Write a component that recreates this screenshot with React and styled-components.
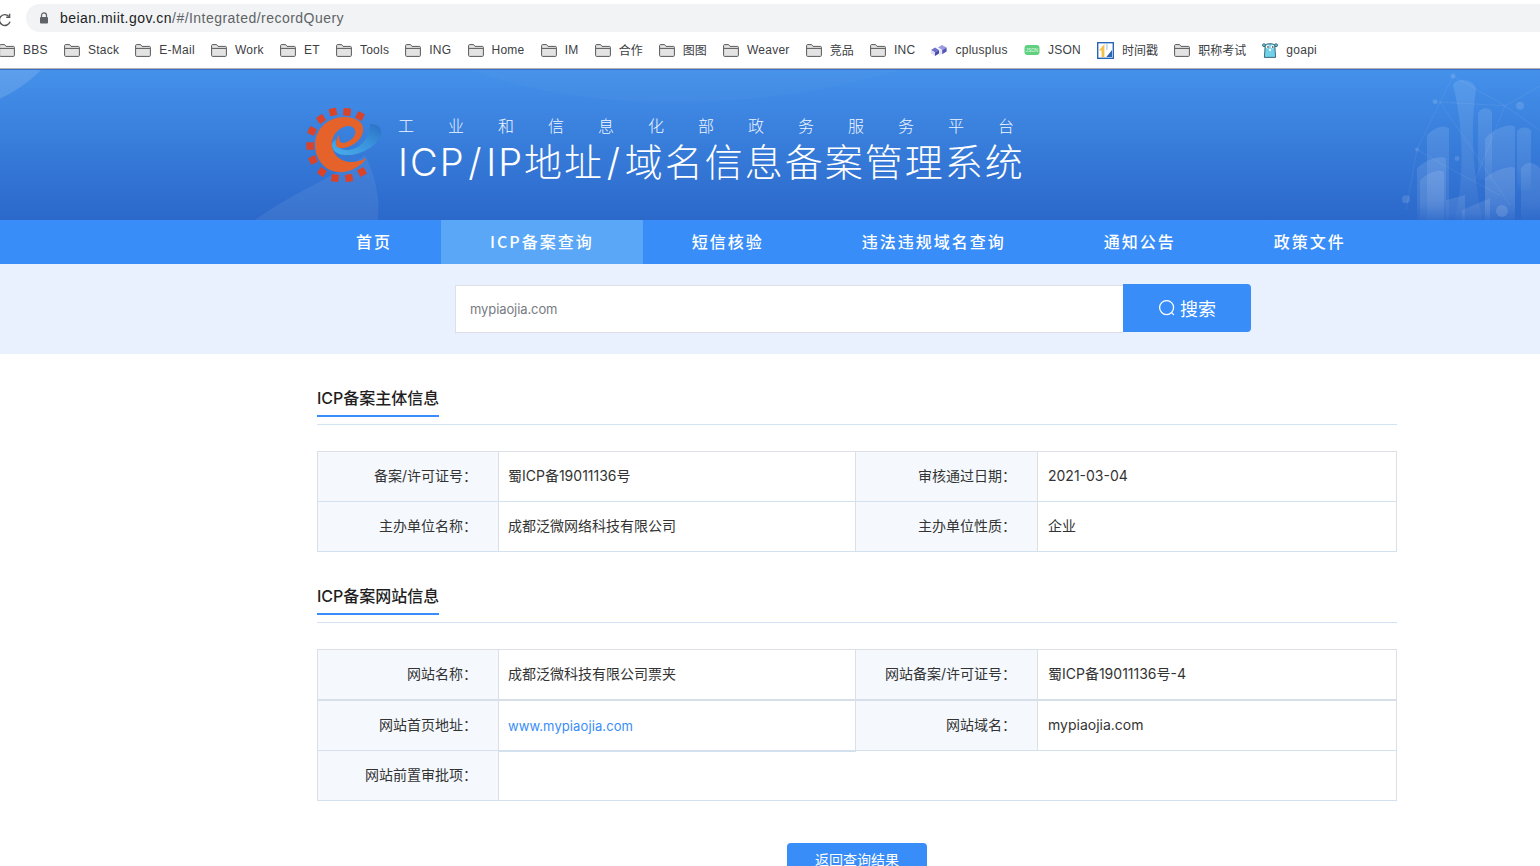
import styled, { createGlobalStyle } from "styled-components";

const GlobalStyle = createGlobalStyle`
  html, body {
    margin: 0;
    height: 866px;
    overflow: hidden;
    background: #fff;
  }
  * { box-sizing: border-box; }
  body {
    font-family: Inter, "Noto Sans CJK SC", sans-serif;
    color: #333;
  }
`;

const bookmarks = [
  { name: "BBS", icon: "folder" },
  { name: "Stack", icon: "folder" },
  { name: "E-Mail", icon: "folder" },
  { name: "Work", icon: "folder" },
  { name: "ET", icon: "folder" },
  { name: "Tools", icon: "folder" },
  { name: "ING", icon: "folder" },
  { name: "Home", icon: "folder" },
  { name: "IM", icon: "folder" },
  { name: "合作", icon: "folder", cjk: true },
  { name: "图图", icon: "folder", cjk: true },
  { name: "Weaver", icon: "folder" },
  { name: "竞品", icon: "folder", cjk: true },
  { name: "INC", icon: "folder" },
  { name: "cplusplus", icon: "cpp" },
  { name: "JSON", icon: "json" },
  { name: "时间戳", icon: "time", cjk: true },
  { name: "职称考试", icon: "folder", cjk: true },
  { name: "goapi", icon: "go" },
];

const navItems = ["首页", "ICP备案查询", "短信核验", "违法违规域名查询", "通知公告", "政策文件"];

const gearTeeth = [
  [347, 112, 5], [333, 112, -12], [360, 116, 25], [321, 119, -35], [312, 131, -65], [310, 146, 90],
  [313, 160, 65], [322, 172, 35], [335, 178, 8], [349, 178, -8], [362, 172, -28],
];

const FolderIcon = () => (
  <svg width="16" height="13" viewBox="0 0 16 13">
    <path d="M.6 11.4V1.6c0-.6.4-1 1-1h4l1.4 1.8h7.4c.6 0 1 .4 1 1v8c0 .6-.4 1-1 1H1.6c-.6 0-1-.4-1-1z" fill="#e3e3e3" stroke="#5a5a5a" strokeWidth="1" />
    <path d="M1 4.4h14" stroke="#5a5a5a" strokeWidth="1" />
  </svg>
);

const CppIcon = () => (
  <svg width="16" height="13" viewBox="0 0 16 13">
    <path d="M0 6l4-2.4 4 2.4-4 2.4z" fill="#6f70c9" />
    <path d="M0 6v3.4l4 2.6V8.4z" fill="#dcdcf5" />
    <path d="M4 8.4V12l4-2.6V6z" fill="#4a4ba6" />
    <path d="M7 3.4L11 1l4.6 2.4-4.4 2.6z" fill="#9a9be0" />
    <path d="M8 6l3.2 0v3.4L8 11.4z" fill="#e7e7fa" />
    <path d="M11.2 6l4.4-2.6v4l-4.4 2.8z" fill="#5657b4" />
  </svg>
);

const JsonIcon = () => (
  <svg width="16" height="12" viewBox="0 0 16 12">
    <rect x="0.5" y="1" width="15" height="10" rx="3" fill="#5fd07d" />
    <text x="8" y="7.6" textAnchor="middle" fontSize="4.6" fill="#eafff0" fontFamily="Liberation Sans, sans-serif">JSON</text>
  </svg>
);

const TimeIcon = () => (
  <svg width="17" height="17" viewBox="0 0 17 17">
    <rect x="0.7" y="0.7" width="15.6" height="15.6" fill="#fff" stroke="#2a66b8" strokeWidth="1.4" />
    <path d="M2 8.4L7.4 2v13H4.6V8.4z" fill="#f4c04a" />
    <path d="M9.4 15L15 8v7z" fill="#2a66b8" />
    <path d="M9.4 2h1v6h-1z" fill="#9dbce3" />
  </svg>
);

const GoIcon = () => (
  <svg width="16" height="16" viewBox="0 0 16 16">
    <circle cx="2" cy="3.2" r="1.5" fill="#5fc6e0" stroke="#234a58" strokeWidth=".7" />
    <circle cx="14" cy="3.2" r="1.5" fill="#5fc6e0" stroke="#234a58" strokeWidth=".7" />
    <path d="M3.2 3.2C4.6 1.2 11.4 1.2 12.8 3.2l.8 12.2H2.4z" fill="#6fd2ea" stroke="#234a58" strokeWidth=".8" />
    <circle cx="5.6" cy="4.8" r="1.8" fill="#fff" />
    <circle cx="10.4" cy="4.8" r="1.8" fill="#fff" />
    <circle cx="6" cy="5" r=".8" fill="#111" />
    <circle cx="10.8" cy="5" r=".8" fill="#111" />
    <rect x="7" y="6.8" width="2" height="2.2" fill="#fff" />
  </svg>
);

const bookmarkIcons = { folder: FolderIcon, cpp: CppIcon, json: JsonIcon, time: TimeIcon, go: GoIcon };

// the round company mark: red gear teeth, orange e, blue swoosh
const Logo = () => (
  <svg width="76" height="76" viewBox="306 107 76 76">
    <defs>
      <linearGradient id="swoosh" x1="0" y1="1" x2="1" y2="0">
        <stop offset="0" stopColor="#4aaeea" />
        <stop offset="0.55" stopColor="#3a93dc" />
        <stop offset="1" stopColor="#2a6fc6" />
      </linearGradient>
    </defs>
    {gearTeeth.map(([x, y, r]) => (
      <rect key={`${x}-${y}`} x={x - 3.7} y={y - 3.7} width="7.4" height="7.4" rx="0.6" fill="#d9432a" transform={`rotate(${r} ${x} ${y})`} />
    ))}
    <path d="M370 124C378 124 382 128 381 134C379 144 362 156 346 155C337 155 331 150 332 144C333 141 335 140 336 139C334 146 340 150 347 150C358 150 370 140 370 124Z" fill="url(#swoosh)" />
    <path d="M367 158C358 169 347 173 338 172C324 171 315 158 315 145C315 129 328 117 344 117C356 117 364 122 363 131C362 141 350 148 342 148C338 148 336 147 336 144C336 141 337 137 339 135C339 140 340 143 343 143C350 142 357 136 355 130C353 125 346 125 340 129C334 133 331 140 332 147C334 157 343 162 351 162C357 162 363 160 367 158Z" fill="#e5622a" />
  </svg>
);

// background drawing of the banner: pale curves and the wireframe skyline
const BannerArt = () => (
  <BannerSvg viewBox="0 69 1540 151" preserveAspectRatio="none">
    <defs>
      <linearGradient id="tower" x1="0" y1="0" x2="0" y2="1">
        <stop offset="0" stopColor="#fff" stopOpacity="0.11" />
        <stop offset="0.7" stopColor="#fff" stopOpacity="0.08" />
        <stop offset="1" stopColor="#fff" stopOpacity="0.02" />
      </linearGradient>
    </defs>
    <path d="M0 69H41C28 82 14 91 0 98Z" fill="#fff" fillOpacity="0.13" />
    <path d="M255 220C290 194 335 176 365 155C376 176 380 200 378 220Z" fill="#fff" fillOpacity="0.07" />
    <path d="M470 69C600 115 760 110 900 69Z" fill="#fff" fillOpacity="0.025" />
    <g stroke="#fff" strokeOpacity="0.07" strokeWidth="1" fill="none">
      <path d="M1417 149L1453 75L1505 105L1540 85M1417 149L1406 210M1417 149L1453 170L1500 195M1435 101L1505 105L1540 130M1440 101L1510 205M1505 105L1475 180" />
    </g>
    <g fill="#fff" fillOpacity="0.13">
      <circle cx="1453" cy="75" r="2.5" />
      <circle cx="1435" cy="101" r="2.5" />
      <circle cx="1417" cy="149" r="2" />
      <circle cx="1520" cy="105" r="4" />
      <circle cx="1406" cy="199" r="4" />
      <circle cx="1502" cy="211" r="6" />
      <circle cx="1457" cy="158" r="2.5" />
    </g>
    <g fill="url(#tower)">
      <path d="M1453 84C1456 76 1474 78 1476 88C1472 120 1470 150 1482 220H1455C1466 170 1462 120 1453 84Z" />
      <path d="M1478 112C1482 106 1490 106 1492 112V180H1478Z" />
      <path d="M1427 135C1434 126 1444 124 1449 128V220H1427Z" />
      <path d="M1417 168C1424 160 1440 154 1446 158V220H1417Z" />
      <path d="M1420 180C1428 172 1440 168 1444 172V220H1420Z" />
      <path d="M1485 138C1494 128 1508 122 1515 126V220H1485Z" />
      <path d="M1485 178C1494 170 1512 164 1515 168V220H1485Z" />
      <path d="M1517 130C1522 126 1528 126 1531 130V190H1517Z" />
      <path d="M1521 168C1526 160 1535 162 1540 168V220H1521Z" />
      <path d="M1446 200L1465 195V220H1446Z" />
      <path d="M1462 210L1490 198V220H1462Z" />
    </g>
  </BannerSvg>
);

const SearchGlyph = () => (
  <svg width="18" height="18" viewBox="0 0 18 18" fill="none" stroke="#fff" strokeWidth="1.3">
    <circle cx="8.6" cy="8.6" r="7" />
    <path d="M13.6 13.6L15.6 15.6" strokeLinecap="round" />
  </svg>
);

const LockGlyph = () => (
  <svg width="10" height="12" viewBox="0 0 10 12">
    <path d="M2.5 5V3.4a2.5 2.5 0 0 1 5 0V5" fill="none" stroke="#5f6368" strokeWidth="1.2" />
    <rect x="1" y="5" width="8" height="6.4" rx="1" fill="#5f6368" />
  </svg>
);

const ReloadGlyph = () => (
  <svg width="14" height="14" viewBox="0 0 14 14" fill="none" stroke="#555" strokeWidth="1.4">
    <path d="M10.8 3.4A5.4 5.4 0 1 0 12 8.6" />
    <path d="M11.6 0.8V4.2H8.2" />
  </svg>
);

function Section({ title, children }) {
  return (
    <SectionWrap>
      <SectionHead>
        <SectionTitle>{title}</SectionTitle>
      </SectionHead>
      {children}
    </SectionWrap>
  );
}

export default function App() {
  return (
    <Page>
      <GlobalStyle />
      <BrowserBar>
        <ReloadSlot><ReloadGlyph /></ReloadSlot>
        <AddressPill>
          <LockGlyph />
          <UrlText>
            beian.miit.gov.cn<UrlPath>/#/Integrated/recordQuery</UrlPath>
          </UrlText>
        </AddressPill>
      </BrowserBar>
      <BookmarkBar>
        {bookmarks.map((b) => {
          const Icon = bookmarkIcons[b.icon];
          return (
            <Bookmark key={b.name}>
              <Icon />
              <BookmarkName $cjk={b.cjk}>{b.name}</BookmarkName>
            </Bookmark>
          );
        })}
      </BookmarkBar>

      <Banner>
        <BannerArt />
        <LogoSlot><Logo /></LogoSlot>
        <BrandText>
          <Ministry>工业和信息化部政务服务平台</Ministry>
          <SystemName>ICP<Slash>/</Slash>IP地址<Slash>/</Slash>域名信息备案管理系统</SystemName>
        </BrandText>
      </Banner>

      <NavBar>
        {navItems.map((item) => (
          <NavItem key={item} $active={item === "ICP备案查询"}>{item}</NavItem>
        ))}
      </NavBar>

      <SearchBand>
        <SearchInput defaultValue="mypiaojia.com" />
        <SearchButton>
          <SearchGlyph />
          搜索
        </SearchButton>
      </SearchBand>

      <Section title="ICP备案主体信息">
        <InfoGrid>
          <LabelCell>备案/许可证号：</LabelCell>
          <ValueCell>蜀ICP备19011136号</ValueCell>
          <LabelCell>审核通过日期：</LabelCell>
          <ValueCell>2021-03-04</ValueCell>
          <LabelCell>主办单位名称：</LabelCell>
          <ValueCell>成都泛微网络科技有限公司</ValueCell>
          <LabelCell>主办单位性质：</LabelCell>
          <ValueCell>企业</ValueCell>
        </InfoGrid>
      </Section>

      <Section title="ICP备案网站信息">
        <InfoGrid>
          <LabelCell $thick>网站名称：</LabelCell>
          <ValueCell $thick>成都泛微科技有限公司票夹</ValueCell>
          <LabelCell $thick>网站备案/许可证号：</LabelCell>
          <ValueCell $thick>蜀ICP备19011136号-4</ValueCell>
          <LabelCell>网站首页地址：</LabelCell>
          <ValueCell $raised><SiteLink>www.mypiaojia.com</SiteLink></ValueCell>
          <LabelCell>网站域名：</LabelCell>
          <ValueCell>mypiaojia.com</ValueCell>
          <LabelCell>网站前置审批项：</LabelCell>
          <ValueCell $span={3} />
        </InfoGrid>
      </Section>

      <BackRow>
        <BackButton>返回查询结果</BackButton>
      </BackRow>
    </Page>
  );
}

const Page = styled.div`
  width: 1540px;
  height: 866px;
  overflow: hidden;
`;

const BrowserBar = styled.div`
  display: flex;
  height: 36px;
  padding-top: 4px;
`;

const ReloadSlot = styled.div`
  width: 26px;
  margin-left: -2px;
  margin-right: 2px;
  padding-top: 7px;
`;

const AddressPill = styled.div`
  flex: 1;
  height: 28px;
  margin-right: -20px;
  padding-left: 13px;
  display: flex;
  align-items: center;
  gap: 11px;
  background: #f1f3f4;
  border-radius: 14px;
`;

const UrlText = styled.div`
  font: 14px "Liberation Sans", sans-serif;
  letter-spacing: 0.47px;
  color: #202124;
`;

const UrlPath = styled.span`
  color: #5f6368;
`;

const BookmarkBar = styled.div`
  display: flex;
  align-items: center;
  gap: 16.15px;
  height: 33px;
  margin-left: -1px;
  border-bottom: 1px solid #b4b4b4;
  padding-bottom: 4px;
  white-space: nowrap;
`;

const Bookmark = styled.div`
  display: flex;
  align-items: center;
  gap: 8px;
  font: 12px "Liberation Sans", "Noto Sans CJK SC", sans-serif;
  color: #3c4043;
`;

const BookmarkName = styled.span`
  padding-bottom: ${(p) => (p.$cjk ? "2px" : "0")};
  letter-spacing: ${(p) => (p.$cjk ? "0" : "0.25px")};
`;

const Banner = styled.header`
  position: relative;
  height: 151px;
  padding: 37px 0 0 306px;
  display: flex;
  align-items: flex-start;
  gap: 16px;
  overflow: hidden;
  background: linear-gradient(180deg, #4491ea 0%, #2b68ca 100%);
  border-top: 1px solid #3a6fc9;
`;

const BannerSvg = styled.svg`
  position: absolute;
  inset: 0;
  width: 100%;
  height: 100%;
`;

const LogoSlot = styled.div`
  position: relative;
  height: 76px;
`;

const BrandText = styled.div`
  position: relative;
  color: #fff;
  white-space: nowrap;
  padding-top: 8px;
`;

const Ministry = styled.div`
  font: 300 16px/20px "Noto Sans CJK SC", sans-serif;
  letter-spacing: 34px;
  color: #f0f6ff;
`;

const SystemName = styled.h1`
  margin: 3px 0 0;
  font: 300 38px/48px Inter, "Noto Sans CJK SC", sans-serif;
  letter-spacing: 2px;
`;

const Slash = styled.span`
  padding: 0 2.75px;
`;

const NavBar = styled.nav`
  display: flex;
  height: 44px;
  padding-left: 307px;
  background: #388df8;
`;

const NavItem = styled.a`
  padding: 0 49px 2px;
  font: 500 16px/42px "Noto Sans CJK SC", sans-serif;
  letter-spacing: 2px;
  color: #fff;
  background: ${(p) => (p.$active ? "#5aa7f8" : "transparent")};
`;

const SearchBand = styled.div`
  display: flex;
  align-items: flex-start;
  height: 90px;
  padding: 20px 0 0 455px;
  background: #e8f1fd;
`;

const SearchInput = styled.input`
  width: 668px;
  height: 48px;
  margin-top: 1px;
  padding: 0 14px;
  border: 1px solid #dcdfe6;
  border-right: 0;
  outline: none;
  background: #fff;
  font: 13px Inter, sans-serif;
  letter-spacing: -0.1px;
  color: #777b82;
`;

const SearchButton = styled.button`
  width: 128px;
  height: 48px;
  display: flex;
  align-items: center;
  justify-content: center;
  gap: 4px;
  border: 0;
  border-radius: 0 4px 4px 0;
  background: #388df8;
  color: #fff;
  font: 18px "Noto Sans CJK SC", sans-serif;
`;

const SectionWrap = styled.section`
  width: 1080px;
  margin-left: 317px;
  padding-top: 32px;
`;

const SectionHead = styled.div`
  height: 39px;
  border-bottom: 1px solid #d3e3f3;
  margin-bottom: 26px;
`;

const SectionTitle = styled.h2`
  display: inline-block;
  height: 31px;
  margin: 0;
  border-bottom: 2px solid #388df8;
  font: 500 16px/24px Inter, "Noto Sans CJK SC", sans-serif;
  color: #1f1f1f;
`;

const InfoGrid = styled.div`
  display: grid;
  grid-template-columns: 181px 357px 182px 1fr;
  border-top: 1px solid #dcdfe6;
  border-left: 1px solid #dcdfe6;
  font: 14px Inter, "Noto Sans CJK SC", sans-serif;
  color: #333;
`;

const Cell = styled.div`
  height: ${(p) => (p.$thick ? "51px" : "50px")};
  display: flex;
  align-items: center;
  padding-bottom: 3px;
  border-right: 1px solid #dcdfe6;
  border-bottom: ${(p) => (p.$thick ? "2px solid #d8dfe8" : "1px solid #d3e0ee")};
`;

const LabelCell = styled(Cell)`
  justify-content: flex-end;
  padding-right: 21px;
  background: #f5f9fe;
`;

const ValueCell = styled(Cell)`
  padding-left: 10px;
  grid-column: span ${(p) => p.$span || 1};
  box-shadow: ${(p) => (p.$raised ? "0 1px 0 #d3e0ee" : "none")};
  position: ${(p) => (p.$raised ? "relative" : "static")};

  &:nth-child(4n + 2) {
    padding-left: 9px;
  }
`;

const SiteLink = styled.a`
  padding-top: 3px;
  font-size: 13px;
  letter-spacing: 0.1px;
  color: #388df8;
`;

const BackRow = styled.div`
  width: 1080px;
  margin: 42px 0 0 317px;
  display: flex;
  justify-content: center;
`;

const BackButton = styled.button`
  width: 140px;
  height: 44px;
  padding: 0 0 12px;
  border: 0;
  border-radius: 4px;
  background: #388df8;
  color: #fff;
  font: 14px "Noto Sans CJK SC", sans-serif;
`;
